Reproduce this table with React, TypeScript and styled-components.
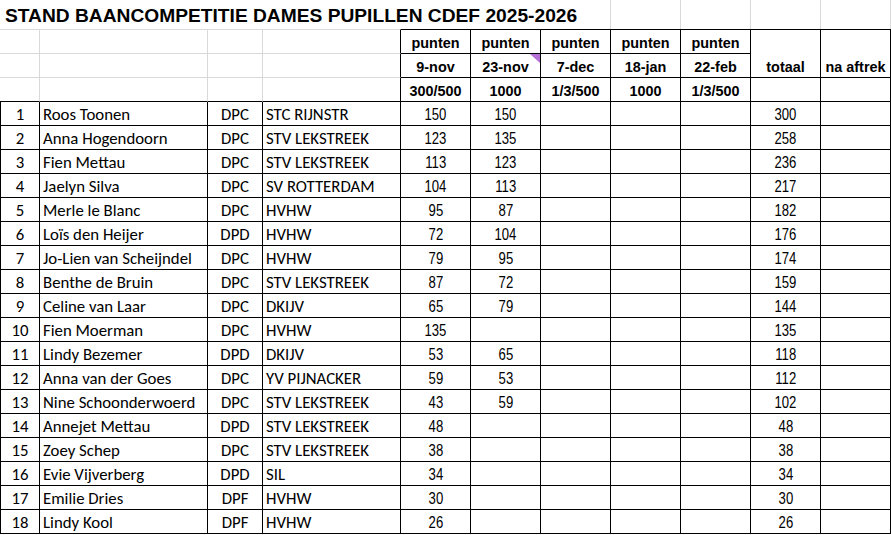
import React from 'react';
import styled, { createGlobalStyle, css } from 'styled-components';

const GRID = '#d9d9d9';
const INK = '#000000';

const CALIBRI = `"Carlito", "Lato", "Liberation Sans", sans-serif`;
const ARIAL = `"Liberation Sans", Arial, sans-serif`;

const GlobalStyle = createGlobalStyle`
  html, body { margin: 0; padding: 0; background: #ffffff; }
  body { width: 891px; height: 535px; overflow: hidden; color: #000; }
`;

const Sheet = styled.div`
  display: grid;
  grid-template-columns: 40px 168px 55px 138px repeat(7, 70px);
  grid-template-rows: 29px 25px 24px 24px repeat(18, 24px);
  width: 891px;
`;

type Edge = 'none' | 'grid' | 'ink';
const edge = (e?: Edge) => (e === 'ink' ? `1px solid ${INK}` : e === 'grid' ? `1px solid ${GRID}` : 'none');

interface BorderProps {
  $top?: Edge;
  $right?: Edge;
  $bottom?: Edge;
  $left?: Edge;
}

const borders = css<BorderProps>`
  border-top: ${(p) => edge(p.$top)};
  border-right: ${(p) => edge(p.$right)};
  border-bottom: ${(p) => edge(p.$bottom)};
  border-left: ${(p) => edge(p.$left)};
`;

const CellBase = styled.div<BorderProps>`
  box-sizing: border-box;
  display: flex;
  align-items: flex-end;
  min-width: 0;
  white-space: nowrap;
  overflow: visible;
  ${borders}
`;

/* Title row */
const TitleCell = styled(CellBase)`
  grid-column: 1 / 8;
  padding: 0 0 2px 5px;
  font: bold 19.2px/22px ${ARIAL};
  color: #000;
`;

const EmptyTitleCell = styled(CellBase)``;

/* Header block */
const BlankHead = styled(CellBase)``;

const PointsHead = styled(CellBase)`
  position: relative;
  justify-content: center;
  padding-bottom: 2px;
  font: bold 14.4px/16px ${ARIAL};
`;

const CommentMark = styled.span`
  position: absolute;
  top: 0;
  right: 0;
  width: 0;
  height: 0;
  border-top: 9px solid #b672d6;
  border-left: 10px solid transparent;
`;

const TotalHead = styled(CellBase)<{ $col: number }>`
  grid-column: ${(p) => p.$col};
  grid-row: 2 / 4;
  justify-content: center;
  padding-bottom: 2px;
  font: bold 14.4px/16px ${ARIAL};
`;

/* Data rows */
const DataRow = styled.div`
  display: contents;
`;

const RankCell = styled(CellBase)`
  justify-content: center;
  padding-bottom: 1px;
  font: 16.8px/19px ${CALIBRI};
`;

const TextCell = styled(CellBase)<{ $center?: boolean }>`
  justify-content: ${(p) => (p.$center ? 'center' : 'flex-start')};
  padding: 0 0 1px ${(p) => (p.$center ? '0' : '3px')};
  font: 16.8px/19px ${CALIBRI};
`;

const ScoreCell = styled(CellBase)`
  justify-content: center;
  padding-bottom: 1px;
  font: 16px/18px ${ARIAL};
`;

/* Arial Narrow is not installed: narrow the Arial-metric digits instead */
const NarrowDigits = styled.span`
  display: inline-block;
  transform: scaleX(0.82);
  transform-origin: center;
`;

interface Rider {
  rank: number;
  name: string;
  cat: string;
  club: string;
  scores: (number | null)[];
  total: number;
}

const riders: Rider[] = [
  { rank: 1, name: 'Roos Toonen', cat: 'DPC', club: 'STC RIJNSTR', scores: [150, 150], total: 300 },
  { rank: 2, name: 'Anna Hogendoorn', cat: 'DPC', club: 'STV LEKSTREEK', scores: [123, 135], total: 258 },
  { rank: 3, name: 'Fien Mettau', cat: 'DPC', club: 'STV LEKSTREEK', scores: [113, 123], total: 236 },
  { rank: 4, name: 'Jaelyn Silva', cat: 'DPC', club: 'SV ROTTERDAM', scores: [104, 113], total: 217 },
  { rank: 5, name: 'Merle le Blanc', cat: 'DPC', club: 'HVHW', scores: [95, 87], total: 182 },
  { rank: 6, name: 'Loïs den Heijer', cat: 'DPD', club: 'HVHW', scores: [72, 104], total: 176 },
  { rank: 7, name: 'Jo-Lien van Scheijndel', cat: 'DPC', club: 'HVHW', scores: [79, 95], total: 174 },
  { rank: 8, name: 'Benthe de Bruin', cat: 'DPC', club: 'STV LEKSTREEK', scores: [87, 72], total: 159 },
  { rank: 9, name: 'Celine van Laar', cat: 'DPC', club: 'DKIJV', scores: [65, 79], total: 144 },
  { rank: 10, name: 'Fien Moerman', cat: 'DPC', club: 'HVHW', scores: [135, null], total: 135 },
  { rank: 11, name: 'Lindy Bezemer', cat: 'DPD', club: 'DKIJV', scores: [53, 65], total: 118 },
  { rank: 12, name: 'Anna van der Goes', cat: 'DPC', club: 'YV PIJNACKER', scores: [59, 53], total: 112 },
  { rank: 13, name: 'Nine Schoonderwoerd', cat: 'DPC', club: 'STV LEKSTREEK', scores: [43, 59], total: 102 },
  { rank: 14, name: 'Annejet Mettau', cat: 'DPD', club: 'STV LEKSTREEK', scores: [48, null], total: 48 },
  { rank: 15, name: 'Zoey Schep', cat: 'DPC', club: 'STV LEKSTREEK', scores: [38, null], total: 38 },
  { rank: 16, name: 'Evie Vijverberg', cat: 'DPD', club: 'SIL', scores: [34, null], total: 34 },
  { rank: 17, name: 'Emilie Dries', cat: 'DPF', club: 'HVHW', scores: [30, null], total: 30 },
  { rank: 18, name: 'Lindy Kool', cat: 'DPF', club: 'HVHW', scores: [26, null], total: 26 },
];

const rounds = [
  { date: '9-nov', kind: '300/500', comment: false },
  { date: '23-nov', kind: '1000', comment: true },
  { date: '7-dec', kind: '1/3/500', comment: false },
  { date: '18-jan', kind: '1000', comment: false },
  { date: '22-feb', kind: '1/3/500', comment: false },
];

const Score = ({ value }: { value: number | null | undefined }) =>
  value == null ? null : <NarrowDigits>{value}</NarrowDigits>;

export default function App() {
  return (
    <>
      <GlobalStyle />
      <Sheet>
        {/* title row */}
        <TitleCell $right="grid">STAND BAANCOMPETITIE DAMES PUPILLEN CDEF 2025-2026</TitleCell>
        {[0, 1, 2, 3].map((i) => (
          <EmptyTitleCell key={`t${i}`} $right="grid" />
        ))}

        {/* header row 1 */}
        <BlankHead $top="grid" $right="grid" $bottom="grid" />
        <BlankHead $top="grid" $right="grid" $bottom="grid" />
        <BlankHead $top="grid" $right="grid" $bottom="grid" />
        <BlankHead $top="grid" $right="ink" $bottom="grid" />
        {rounds.map((r, i) => (
          <PointsHead key={`p${i}`} $top="ink" $right="ink" $bottom="ink">
            punten
          </PointsHead>
        ))}
        <TotalHead $col={10} $top="ink" $right="ink" $bottom="ink">
          totaal
        </TotalHead>
        <TotalHead $col={11} $top="ink" $right="ink" $bottom="ink">
          na aftrek
        </TotalHead>

        {/* header row 2 */}
        <BlankHead $right="grid" $bottom="grid" />
        <BlankHead $right="grid" $bottom="grid" />
        <BlankHead $right="grid" $bottom="grid" />
        <BlankHead $right="ink" $bottom="grid" />
        {rounds.map((r, i) => (
          <PointsHead key={`d${i}`} $right="ink" $bottom="ink">
            {r.date}
            {r.comment && <CommentMark />}
          </PointsHead>
        ))}

        {/* header row 3 */}
        <BlankHead $right="grid" $bottom="ink" />
        <BlankHead $right="grid" $bottom="ink" />
        <BlankHead $right="grid" $bottom="ink" />
        <BlankHead $right="ink" $bottom="ink" />
        {rounds.map((r, i) => (
          <PointsHead key={`k${i}`} $right="ink" $bottom="ink">
            {r.kind}
          </PointsHead>
        ))}
        <PointsHead $right="ink" $bottom="ink" />
        <PointsHead $right="ink" $bottom="ink" />

        {/* data */}
        {riders.map((r) => (
          <DataRow key={r.rank}>
            <RankCell $left="ink" $right="ink" $bottom="ink">
              {r.rank}
            </RankCell>
            <TextCell $right="ink" $bottom="ink">
              {r.name}
            </TextCell>
            <TextCell $center $right="ink" $bottom="ink">
              {r.cat}
            </TextCell>
            <TextCell $right="ink" $bottom="ink">
              {r.club}
            </TextCell>
            {rounds.map((_, i) => (
              <ScoreCell key={i} $right="ink" $bottom="ink">
                <Score value={r.scores[i]} />
              </ScoreCell>
            ))}
            <ScoreCell $right="ink" $bottom="ink">
              <Score value={r.total} />
            </ScoreCell>
            <ScoreCell $right="ink" $bottom="ink" />
          </DataRow>
        ))}
      </Sheet>
    </>
  );
}
